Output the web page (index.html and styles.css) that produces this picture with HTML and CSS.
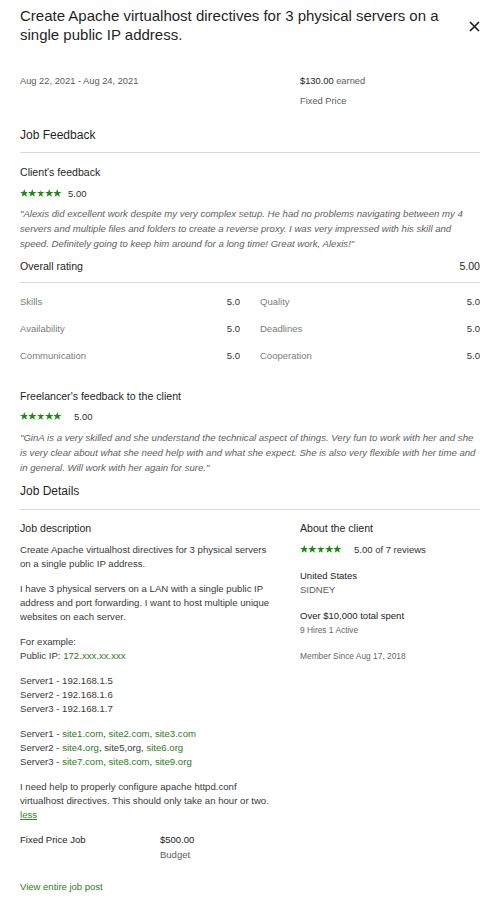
FILE: index.html
```html
<!DOCTYPE html>
<html>
<head>
<meta charset="utf-8">
<link rel="stylesheet" href="styles.css">
</head>
<body>
<div class="page">
  <header class="head">
    <h1 class="title">Create Apache virtualhost directives for 3 physical servers on a single public IP address.</h1>
    <button class="close" aria-label="Close">
      <svg width="11" height="11" viewBox="0 0 11 11"><path d="M1 1L10 10M10 1L1 10" stroke="#1a1a1a" stroke-width="1.6" fill="none"/></svg>
    </button>
  </header>

  <div class="two meta">
    <div class="muted">Aug 22, 2021 - Aug 24, 2021</div>
    <div>
      <div><span class="dark">$130.00</span> <span class="muted">earned</span></div>
      <div class="muted">Fixed Price</div>
    </div>
  </div>

  <h2 class="section">Job Feedback</h2>

  <h3 class="sub first">Client's feedback</h3>
  <div class="stars-row">
    <span class="stars"></span><span class="score">5.00</span>
  </div>
  <p class="quote">"Alexis did excellent work despite my very complex setup. He had no problems navigating between my 4 servers and multiple files and folders to create a reverse proxy. I was very impressed with his skill and speed. Definitely going to keep him around for a long time! Great work, Alexis!"</p>

  <div class="overall"><span>Overall rating</span><span>5.00</span></div>
  <div class="ratings">
    <div class="rate"><span>Skills</span><b>5.0</b></div>
    <div class="rate"><span>Quality</span><b>5.0</b></div>
    <div class="rate"><span>Availability</span><b>5.0</b></div>
    <div class="rate"><span>Deadlines</span><b>5.0</b></div>
    <div class="rate"><span>Communication</span><b>5.0</b></div>
    <div class="rate"><span>Cooperation</span><b>5.0</b></div>
  </div>

  <h3 class="sub fl">Freelancer's feedback to the client</h3>
  <div class="stars-row wide">
    <span class="stars"></span><span class="score">5.00</span>
  </div>
  <p class="quote q2">"GinA is a very skilled and she understand the technical aspect of things. Very fun to work with her and she is very clear about what she need help with and what she expect. She is also very flexible with her time and in general. Will work with her again for sure."</p>

  <h2 class="section details">Job Details</h2>

  <div class="two cols">
    <div class="desc">
      <h3 class="sub">Job description</h3>
      <div class="body">
        <p>Create Apache virtualhost directives for 3 physical servers on a single public IP address.</p>
        <p>I have 3 physical servers on a LAN with a single public IP address and port forwarding. I want to host multiple unique websites on each server.</p>
        <p>For example:<br>Public IP: <span class="lnk">172.xxx.xx.xxx</span></p>
        <p>Server1 - 192.168.1.5<br>Server2 - 192.168.1.6<br>Server3 - 192.168.1.7</p>
        <p>Server1 - <span class="lnk">site1.com</span>, <span class="lnk">site2.com</span>, <span class="lnk">site3.com</span><br>Server2 - <span class="lnk">site4.org</span>, site5,org, <span class="lnk">site6.org</span><br>Server3 - <span class="lnk">site7.com</span>, <span class="lnk">site8.com</span>, <span class="lnk">site9.org</span></p>
        <p>I need help to properly configure apache httpd.conf virtualhost directives. This should only take an hour or two.<br><a class="less" href="#">less</a></p>
      </div>
      <div class="budget">
        <div class="dark">Fixed Price Job</div>
        <div><div class="dark">$500.00</div><div class="muted">Budget</div></div>
      </div>
      <a class="view" href="#">View entire job post</a>
    </div>
    <aside class="client">
      <h3 class="sub">About the client</h3>
      <div class="stars-row wide">
        <span class="stars"></span><span class="score">5.00 of 7 reviews</span>
      </div>
      <div class="cblock">
        <div class="dark">United States</div>
        <div class="muted">SIDNEY</div>
      </div>
      <div class="cblock">
        <div class="dark">Over $10,000 total spent</div>
        <div class="small">9 Hires 1 Active</div>
      </div>
      <div class="cblock small member">Member Since Aug 17, 2018</div>
    </aside>
  </div>
</div>
</body>
</html>
```

FILE: styles.css
```css
* { box-sizing: border-box; }
html, body { margin: 0; padding: 0; background: #fff; }
body {
  font-family: "Liberation Sans", Arial, sans-serif;
  color: #222;
  width: 500px;
}
.page { padding: 0 20px 20px; }

.head { display: flex; align-items: flex-start; justify-content: space-between; }
.title {
  margin: 0;
  padding-top: 6px;
  width: 440px;
  font-size: 15px;
  line-height: 19px;
  font-weight: normal;
  color: #1f1f1f;
}
.close {
  border: 0; background: none; padding: 0;
  margin: 21px 0 0 0;
  width: 11px; height: 11px;
  display: flex;
}

.two { display: grid; grid-template-columns: 260px 1fr; column-gap: 20px; }
.meta { margin-top: 27px; font-size: 9.3px; line-height: 20px; }
.muted { color: #5b5b5b; }
.dark { color: #222; }

.section {
  margin: 16px 0 0;
  font-size: 12px;
  line-height: 16px;
  font-weight: normal;
  color: #1f1f1f;
  padding-bottom: 9px;
  border-bottom: 1px solid #d9d9d9;
}
.sub {
  margin: 0;
  font-size: 10.6px;
  line-height: 15px;
  font-weight: normal;
  color: #1f1f1f;
}
.sub.first { margin-top: 12px; }

.stars-row { display: flex; align-items: center; margin-top: 6px; height: 14px; font-size: 9.5px; color: #333; }
.stars {
  width: 42px; height: 8px;
  background-image: url("data:image/svg+xml,%3Csvg xmlns='http://www.w3.org/2000/svg' width='8.4' height='8' viewBox='0 0 8.4 8'%3E%3Cpolygon points='4,0 5,2.9 8,2.9 5.6,4.7 6.5,7.7 4,5.9 1.5,7.7 2.4,4.7 0,2.9 3,2.9' fill='%231d8a10'/%3E%3C/svg%3E");
  background-repeat: repeat-x;
  background-size: 8.4px 8px;
  margin-right: 6px;
}
.stars-row.wide .stars { margin-right: 12px; }

.quote {
  margin: 6px 0 0;
  font-size: 9.6px;
  line-height: 15px;
  font-style: italic;
  color: #5e5e5e;
}

.overall {
  display: flex; justify-content: space-between;
  margin-top: 8px;
  font-size: 10.6px; line-height: 15px;
  padding-bottom: 8px;
  border-bottom: 1px solid #d9d9d9;
  color: #1f1f1f;
}
.ratings {
  display: grid; grid-template-columns: 1fr 1fr;
  column-gap: 20px; row-gap: 12px;
  margin-top: 11px;
  font-size: 9.5px; line-height: 15px;
}
.rate { display: flex; justify-content: space-between; }
.rate span { color: #7c7c7c; }
.rate b { font-weight: normal; color: #333; }

.sub.fl { margin-top: 26px; }
.stars-row.wide { margin-top: 5px; }
.quote.q2 { margin-top: 7px; font-size: 9.6px; }

.section.details { margin-top: 8px; padding-bottom: 10px; }

.cols { margin-top: 11px; }
.body { margin-top: 7px; max-width: 255px; font-size: 9.6px; line-height: 14px; color: #3a3a3a; }
.body p { margin: 0 0 11px; }
.body p:last-child { margin-bottom: 0; }
.lnk { color: #2f7a22; }
.less { color: #2f8a22; text-decoration: underline; }

.budget {
  display: grid; grid-template-columns: 140px 1fr;
  margin-top: 10px;
  font-size: 9.5px; line-height: 15px;
}
.view {
  display: block;
  margin-top: 17px;
  font-size: 9.5px; line-height: 15px;
  color: #2f7a22;
  text-decoration: none;
}

.client .stars-row { margin-top: 6px; }
.cblock { margin-top: 13px; font-size: 9.5px; line-height: 14px; }
.cblock + .cblock { margin-top: 12px; }
.small { font-size: 8.4px; color: #666; }
.member { margin-top: 12px; }
```
